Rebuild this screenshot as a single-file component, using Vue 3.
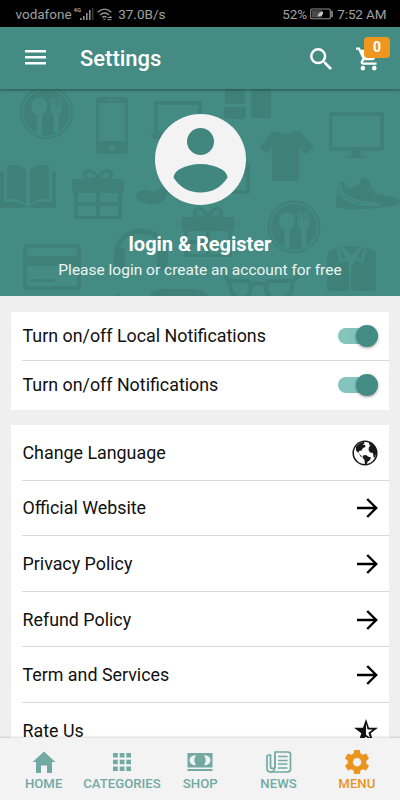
<script setup>
const toggles = ['Turn on/off Local Notifications', 'Turn on/off Notifications']
const links = [
  { label: 'Change Language', icon: 'globe' },
  { label: 'Official Website', icon: 'arrow' },
  { label: 'Privacy Policy', icon: 'arrow' },
  { label: 'Refund Policy', icon: 'arrow' },
  { label: 'Term and Services', icon: 'arrow' },
  { label: 'Rate Us', icon: 'star' }
]
const tabs = [
  { label: 'HOME', icon: 'home' },
  { label: 'CATEGORIES', icon: 'grid' },
  { label: 'SHOP', icon: 'cash' },
  { label: 'NEWS', icon: 'news' },
  { label: 'MENU', icon: 'gear' }
]
</script>

<template>
  <div class="screen">
    <div class="status">
      <span class="carrier">vodafone</span>
      <span class="net">4G</span>
      <svg class="signal" width="14" height="13" viewBox="0 0 14 13">
        <path d="M0 10h1.6v2H0zM3 8h1.6v4H3zM6 5h1.6v7H6zM9 2h1.6v10H9z" fill="#8f8f8f" />
        <path d="M12 0h1.4v12H12z" fill="#3a3a3a" />
      </svg>
      <svg class="wifi" width="16" height="13" viewBox="0 0 16 13" fill="none" stroke="#969696" stroke-width="1.3">
        <path d="M.7 4.2Q7.5-2 14.3 4.2M3 7Q7.5 3 12 7M5.2 9.5Q7.5 7.6 9.5 9.3" />
        <path d="M6.3 11.3h2.2M10.5 9.5h4M13 8l1.5 1.5M14.5 11.7h-4" stroke-width="1" />
      </svg>
      <span class="speed">37.0B/s</span>
      <span class="percent">52%</span>
      <svg class="battery" width="24" height="12" viewBox="0 0 24 12">
        <rect x=".7" y="1" width="19.6" height="9.8" rx="1" fill="none" stroke="#8e8e8e" stroke-width="1.1" />
        <path d="M2 2.3h10v7.2H2z" fill="#4b4b4b" />
        <path d="M21.2 2.8h1.6v6.4h-1.6z" fill="#8e8e8e" />
        <path d="M7.500 9Q7.700 4 13 3.400 13.500 8.600 8.800 8.200z" fill="#c4c4c4" />
      </svg>
      <span class="time">7:52 AM</span>
    </div>

    <header class="bar">
      <svg class="burger" width="21" height="15" viewBox="0 0 21 15"><path d="M0 0h21v2.500H0zM0 6h21v2.500H0zM0 12h21v2.500H0z" fill="#fff" /></svg>
      <h1>Settings</h1>
      <svg class="search" width="22" height="22" viewBox="3 3 17.5 17.5"><path fill="#fff" d="M15.5 14h-.79l-.28-.27A6.47 6.47 0 0 0 16 9.5 6.5 6.5 0 1 0 9.5 16c1.61 0 3.09-.59 4.23-1.57l.27.28v.79l5 4.99L20.49 19zm-6 0a4.5 4.5 0 1 1 0-9 4.5 4.5 0 0 1 0 9z" /></svg>
      <div class="cart">
        <svg width="24" height="24" viewBox="1 2 21 20"><path fill="#fff" d="M7 18a2 2 0 1 0 0 4 2 2 0 0 0 0-4zM1 2v2h2l3.6 7.59-1.35 2.45C4.52 15.37 5.48 17 7 17h12v-2H7.42a.25.25 0 0 1-.25-.25l.03-.12L8.1 13h7.45c.75 0 1.41-.41 1.75-1.03L20.88 5.5A1 1 0 0 0 20 4H5.21l-.94-2zM17 18a2 2 0 1 0 0 4 2 2 0 0 0 0-4z" /></svg>
        <span class="badge">0</span>
      </div>
    </header>

    <section class="hero">
      <svg class="pattern" width="400" height="207" viewBox="0 89 400 207" fill="#3f8179">
        <defs>
          <g id="plate">
            <circle r="25.5" fill="none" stroke="#3f8179" stroke-width="1.8" />
            <circle r="23" />
            <path fill="#438b83" d="M-7.5-15c5 0 8 4 8 9 0 4-2 7-5 8.500V22l-5-1.500V2.500c-4-1.500-5.500-5-5.500-8.500 0-5 3-9 7.500-9zM4-15h1.800v9H7v-9h2v9h1.300v-9h1.800v9H13.500v-9h1.800V-3c0 3-1.500 4-3 5v17l-5 2V2c-2-1-3.300-2-3.300-5z" />
          </g>
          <g id="gift">
            <path d="M0 9h52v14H0zM2 23h48v26H2z" />
            <path d="M6 23h18v9H6zM28 23h18v9H28zM6 36h18v10H6zM28 36h18v10H28z" fill="#438b83" />
            <path d="M26 9C14 12 10 5 14 2s9 0 12 7c3-7 8-10 12-7s0 10-12 7z" fill="none" stroke="#3f8179" stroke-width="3.500" />
          </g>
        </defs>
        <use href="#plate" x="46.500" y="112.500" />
        <path fill-rule="evenodd" d="M99 97h26q3 0 3 3v51q0 3-3 3H99q-3 0-3-3v-51q0-3 3-3zm0 6v38h26v-38zm6-3.500v1.500h13v-1.500zM112 144.500a3 3 0 1 0 .1 0z" />
        <path d="M0 172h56v36H32q-4-3-8 0H0z" />
        <path d="M4 168v34q15-2 22 4h4q7-6 22-4v-34z" fill="#438b83" />
        <path d="M7 166q12-3 19 4v34q-8-6-19-5zM49 166q-12-3-19 4v34q8-6 19-5z" />
        <use href="#gift" x="72" y="170" />
        <path fill-rule="evenodd" d="M26 244h52q3 0 3 3v40q0 3-3 3H26q-3 0-3-3v-40q0-3 3-3zm1 4v8h50v-8zm0 18v20h50v-20zm4 13h11v3H31zm13 0h10v3H44z" />
        <path d="M117 265c-3-20 5-33 24-34 19 1 27 14 24 34" fill="none" stroke="#3f8179" stroke-width="5" />
        <path d="M118 248h7v22h-7q-8-11 0-22zM164 248h-7v22h7q8-11 0-22z" />
        <path fill-rule="evenodd" d="M154 101h48v34h-48zm4 4v27h40v-27zM151 134h56q-1 5-6 5h-44q-5 0-6-5z" />
        <path d="M225 89h20v15h-20zM224 107h22v7q0 5-5 5h-12q-5 0-5-5zM251 89h20v29h-20z" />
        <path d="M181 170l4 1q-1 11-6 17-4 4-12 5-2 11-15 11-13 0-16-7 0-7 9-7 3-1 7 2 9-1 10-9z" />
        <path fill-rule="evenodd" d="M206 158h38l6 6v30h-44zm4 18v14h36v-14h-10v5h-15v-5z" />
        <use href="#gift" x="182" y="208" />
        <path d="M260 147l12-15 5-1q9 7 18 0l5 1 14 15-8 7-7-7v34h-27v-34l-6 7z" />
        <path fill-rule="evenodd" d="M331 112h51q2 0 2 2v34q0 3-3 3h-49q-3 0-3-3v-34q0-2 2-2zm1 4v31h48v-31zM351 151h10v4l7 2v1h-24v-1l7-2z" />
        <path d="M340 181l5 2q2 6 7 5 8-2 8-8l4-3 5 2 1 5q5 10 16 12 12 1 14 5v2l-7 3q-27 4-47 3l-10-2q0-17 4-26z" />
        <path d="M340 184q0 10 10 14 12 5 24 5l6 2q-26 1-36-7-7-6-4-14M369 190l5-4M372 193l5-4M376 195l4-4" fill="none" stroke="#438b83" stroke-width="2" />
        <use href="#plate" x="294" y="227" />
        <path d="M330 250l8-3 13 14 13-14 9 3q3 2 3 5v33q0 3-3 3h-43q-3 0-3-3v-33q0-3 3-5z" />
        <path d="M342 248l9 14 10-14M338 249l3 13 6-4 4 6 5-6 6 4 3-13M350 263v28" fill="none" stroke="#438b83" stroke-width="2.500" />
        <path d="M342 246h18l-8 10z" />
        <path d="M355 270v20" fill="none" stroke="#438b83" stroke-width="1.500" stroke-dasharray="2 4" />
        <path d="M225 276l6 5h15q5 0 5 5 0 12-10 12t-11-14zM299 276l-6 5h-22q-5 0-5 5 0 14 13 14 15-4 13-17M251 286q7-6 15 0" fill="none" stroke="#3f8179" stroke-width="4" />
        <path d="M150 296q3-7 13-7h30q11 0 15 7zM114 296l6-3v3z" />
      </svg>
      <svg class="avatar" width="91" height="91" viewBox="0 0 91 91">
        <circle cx="45.500" cy="45.500" r="45.500" fill="#f3f3f3" />
        <circle cx="45.500" cy="27.500" r="13.500" fill="#418780" />
        <path d="M18.500 63.500Q19 59 24 55.500 34 50 45.500 50T67 55.500Q72 59 72.500 63.500 63 78.500 45.500 78.500T18.500 63.500z" fill="#41877f" />
      </svg>
      <div class="login">login &amp; Register</div>
      <div class="hint">Please login or create an account for free</div>
    </section>

    <main>
      <div class="card">
        <div v-for="t in toggles" :key="t" class="row toggle-row">
          <span class="label">{{ t }}</span>
          <span class="switch"><i class="thumb"></i></span>
        </div>
      </div>
      <div class="card">
        <div v-for="l in links" :key="l.label" class="row link-row">
          <span class="label">{{ l.label }}</span>
          <svg v-if="l.icon === 'arrow'" class="arrow" width="21" height="20" viewBox="0 0 21 20"><path d="M0 10h19M10.200 1l9 9-9 9" fill="none" stroke="#000" stroke-width="2.400" /></svg>
          <svg v-else-if="l.icon === 'globe'" class="globe" width="26" height="26" viewBox="0 0 26 26">
            <circle cx="13" cy="13" r="11.800" fill="#fff" stroke="#181818" stroke-width="1.500" />
            <path fill="#181818" d="M4 7Q7 2.500 12 2l.5 1.500-2 1 2.500.5.5 2-2.500 1-1.500 2.500-2.500.5-.5 2 2 2 1.500 1.500-1 .5L6.500 13 4 10.500zM11 15.500l3-.5 2 1.500 3 1-1 2.500-2.500 2-1 2.500-1.500.5-.5-5-2-2.500zM17 2q6 2.500 7.500 8.500 0 4-2 7.500l-1-1-.5-4-3-.5-1.500-2.500.5-3 1.500-1.500-1.500-1z" />
          </svg>
          <svg v-else class="star" width="24" height="24" viewBox="0 0 24 24"><path fill="#111" fill-rule="evenodd" d="M12 0l3 8.700h9l-7.300 5.500 2.800 9L12 17.800 4.500 23.200l2.800-9L0 8.700h9zm0 4.500v11.200l4 3-1.600-5 4.200-3.200h-5z" /></svg>
        </div>
      </div>
    </main>

    <nav class="tabs">
      <div v-for="t in tabs" :key="t.label" class="tab" :class="{ active: t.icon === 'gear' }">
        <svg class="tab-icon" width="26" height="24" viewBox="0 0 26 24" fill="currentColor">
          <path v-if="t.icon === 'home'" d="M13 1.500L24.300 12H21v11h-5v-7.500h-6V23H5V12H1.700z" />
          <path v-else-if="t.icon === 'grid'" d="M4 3h4.800v4.500H4zM10.700 3h4.800v4.500h-4.800zM17.300 3h4.700v4.500h-4.700zM4 9.800h4.800v4.500H4zM10.700 9.800h4.800v4.500h-4.800zM17.300 9.800h4.700v4.500h-4.700zM4 16.500h4.800V21H4zM10.700 16.500h4.800V21h-4.800zM17.300 16.500h4.700V21h-4.700z" />
          <path v-else-if="t.icon === 'cash'" fill-rule="evenodd" d="M.5 3h25v14.500H.5zM8.500 5Q2.500 6 2.500 10.200t6 5.300V14Q6 10 8.500 6.500zM17.500 5q6 1 6 5.200t-6 5.300V14Q20 10 17.500 6.500zM.5 19h25v2H.5z" />
          <g v-else-if="t.icon === 'news'" fill="none" stroke="currentColor" stroke-width="1.700">
            <path d="M9 2h13q2.500 0 2.500 2.500V19q0 3-3 3H4.500Q1 22 1 18.500V7q0-2 2-2h1.500v11.500q0 2 2 2T9 16.500V2z" />
            <path d="M9 5v11.500q0 5.500-5 5.500M12 6.500h9.500M12 10.500h9.500M12 14h9.500M12 18h9.500" stroke-width="1.500" />
          </g>
          <path v-else fill-rule="evenodd" d="M10.200 0h5.600l.7 3.500 2.300 1.300 3.400-1.200 2.800 4.900-2.700 2.300v2.600l2.700 2.300-2.800 4.800-3.400-1.200-2.300 1.300-.7 3.400h-5.600l-.7-3.400-2.300-1.300-3.400 1.200L1 15.700l2.700-2.300v-2.600L1 8.500l2.800-4.900 3.400 1.200 2.300-1.300zM13 8a4.200 4.200 0 1 0 .1 0z" />
        </svg>
        <span class="tab-label">{{ t.label }}</span>
      </div>
    </nav>
  </div>
</template>

<style>
body { margin: 0; background: #efefef; }
</style>

<style scoped>
.screen { width: 400px; height: 800px; overflow: hidden; display: flex; flex-direction: column; background: #efefef; font-family: Roboto, sans-serif; color: #101010; }
.status { flex: none; height: 27px; background: #000; display: flex; align-items: center; box-sizing: border-box; padding: 1px 13.500px 0 15.500px; font-size: 13.500px; color: #a0a0a0; line-height: 26px; white-space: nowrap; }
.net { font-size: 6px; line-height: 8px; margin: -9px 0 0 2px; font-weight: 700; }
.signal { margin: 0 3px 0 -1px; }
.speed { margin-left: 5px; }
.percent { margin-left: auto; }
.battery { margin: 0 3px 0 3px; }
.time { font-size: 13.500px; letter-spacing: -.1px; }
.bar { flex: none; position: relative; z-index: 1; height: 62px; background: #438b83; display: flex; align-items: center; box-sizing: border-box; padding: 2px 18px 0 25px; box-shadow: 0 1px 3px rgba(0, 0, 0, .4); color: #fff; }
.burger { margin-bottom: 3px; }
.bar h1 { margin: 0 0 0 34px; font-size: 22px; line-height: 26px; font-weight: 500; }
.search { margin-left: auto; }
.cart { width: 26px; height: 24px; margin-left: 24px; position: relative; }
.cart svg { display: block; }
.badge { position: absolute; left: 8px; top: -10px; width: 26px; height: 21px; border-radius: 4px; background: #ef9620; font-size: 14px; font-weight: 700; line-height: 21px; text-align: center; }
.hero { flex: none; position: relative; height: 207px; background: #438b83; display: flex; flex-direction: column; align-items: center; color: #fff; }
.pattern { position: absolute; inset: 0; }
.avatar { position: relative; margin-top: 25px; flex: none; }
.login { position: relative; margin-top: 27px; font-size: 20px; line-height: 24px; font-weight: 700; letter-spacing: -.02px; }
.hint { position: relative; margin-top: 3px; font-size: 15.500px; line-height: 22px; color: #edf5f4; }
main { flex: 1; min-height: 0; overflow: hidden; padding: 16px 11px 0; display: flex; flex-direction: column; gap: 15px; }
.card { flex: none; background: #fff; padding-left: 11px; }
.row { display: flex; align-items: center; justify-content: space-between; box-sizing: border-box; border-bottom: 1px solid #dadada; padding-right: 11px; }
.row:last-child { border-bottom-color: transparent; }
.label { font-size: 17.850px; line-height: 24px; padding-left: .5px; }
.toggle-row { height: 49px; }
.link-row { height: 55.600px; padding-top: 1px; }
.switch { position: relative; width: 40px; height: 22px; display: flex; align-items: center; justify-content: flex-end; }
.switch::before { content: ''; position: absolute; left: 0; top: 3px; width: 34px; height: 16px; border-radius: 8px; background: #83c5be; }
.thumb { position: relative; width: 22px; height: 22px; border-radius: 50%; background: #438b83; box-shadow: 0 1px 3px rgba(0, 0, 0, .4); }
.tabs { flex: none; position: relative; height: 62px; background: #f3f3f3; box-shadow: 0 -1px 2px rgba(0, 0, 0, .15); display: grid; grid-template-columns: repeat(5, 78.300px); padding-left: 4.500px; }
.tab { display: flex; flex-direction: column; align-items: center; color: #72aaa3; padding-top: 12px; }
.tab-icon { flex: none; }
.tab.active { color: #ea951f; }
.tab-label { margin-top: 2px; font-size: 13.200px; line-height: 16px; font-weight: 500; }
</style>
